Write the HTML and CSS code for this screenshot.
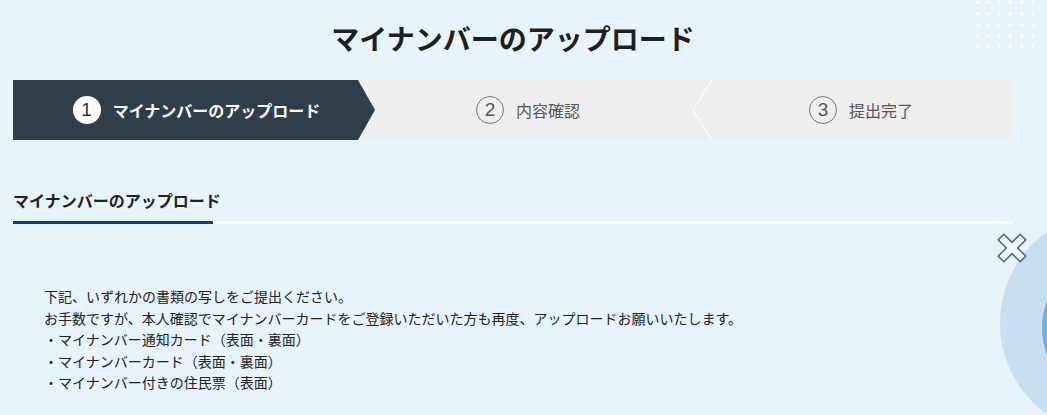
FILE: index.html
```html
<!DOCTYPE html>
<html lang="ja">
<head>
<meta charset="utf-8">
<title>マイナンバーのアップロード</title>
<link rel="stylesheet" href="styles.css">
</head>
<body>
<div class="dots"></div>
<div class="corner">
  <div class="bubble"><div class="bubble-core"></div></div>
</div>
<svg class="cross" width="32" height="32" viewBox="-16 -16 32 32">
  <polygon transform="rotate(45)" points="-4,-15.5 4,-15.5 4,-4 15.5,-4 15.5,4 4,4 4,15.5 -4,15.5 -4,4 -15.5,4 -15.5,-4 -4,-4"/>
</svg>

<main class="page">
<h1 class="title">マイナンバーのアップロード</h1>

<ol class="steps">
  <li class="step current"><span class="num">1</span>マイナンバーのアップロード</li>
  <li class="step middle"><span class="num">2</span>内容確認</li>
  <li class="step last"><span class="num">3</span>提出完了</li>
</ol>

<section class="upload">
  <div class="heading"><h2>マイナンバーのアップロード</h2></div>
  <div class="notice">
    <p>下記、いずれかの書類の写しをご提出ください。</p>
    <p>お手数ですが、本人確認でマイナンバーカードをご登録いただいた方も再度、アップロードお願いいたします。</p>
    <p>・マイナンバー通知カード（表面・裏面）</p>
    <p>・マイナンバーカード（表面・裏面）</p>
    <p>・マイナンバー付きの住民票（表面）</p>
  </div>
</section>
</main>
</body>
</html>
```

FILE: styles.css
```css
html, body {
    margin: 0;
    height: 100%;
    overflow: hidden;
}
body {
    background: #e8f3fa;
    font-family: "Noto Sans CJK JP", "Noto Sans", sans-serif;
    color: #222;
    position: relative;
}
.page {
    width: 1000px;
    padding-left: 13px;
}
.title {
    margin: 0;
    padding-top: 18px;
    height: 40px;
    line-height: 40px;
    text-align: center;
    font-size: 28px;
    font-weight: 700;
    color: #1f1f1f;
    margin-bottom: 22px;
}

/* step indicator */
.steps {
    display: flex;
    margin: 0;
    padding: 0;
    list-style: none;
    height: 60px;
    background: #efefef;
}
.step {
    display: flex;
    align-items: center;
    justify-content: center;
    font-size: 16px;
    color: #555;
    position: relative;
}
.step .num {
    display: flex;
    align-items: center;
    justify-content: center;
    width: 26px;
    height: 26px;
    border: 1px solid #777;
    border-radius: 50%;
    margin-right: 12px;
    font-family: "Liberation Sans", sans-serif;
    font-size: 19px;
    font-weight: 300;
    color: #555;
}
.step.current {
    width: 345px;
    padding-left: 22px;
    box-sizing: border-box;
    background: #2f3e4b;
    color: #fff;
    font-weight: 700;
}
.step.current::after {
    content: "";
    position: absolute;
    right: -17px;
    top: 0;
    width: 17px;
    height: 60px;
    background: #2f3e4b;
    clip-path: polygon(0 0, 100% 50%, 0 100%);
}
.step.current .num {
    width: 28px;
    height: 28px;
    border: 0;
    background: #fff;
    color: #333;
    font-weight: 400;
}
.step.middle {
    width: 335px;
    padding-left: 5px;
    box-sizing: border-box;
}
.step.middle::after {
    content: "";
    position: absolute;
    right: -19px;
    top: 0;
    width: 19px;
    height: 60px;
    background: linear-gradient(to top right, transparent calc(50% - 1px), #fff 50%, transparent calc(50% + 1px)) bottom / 100% 50% no-repeat,
                linear-gradient(to bottom right, transparent calc(50% - 1px), #fff 50%, transparent calc(50% + 1px)) top / 100% 50% no-repeat;
    z-index: 1;
}
.step.last {
    flex: 1;
    padding-left: 16px;
}

/* section heading */
.upload {
    margin-top: 48px;
}
.heading {
    border-bottom: 3px solid #fff;
}
.heading h2 {
    width: 200px;
    margin: 0 0 -3px;
    padding-bottom: 9px;
    line-height: 24px;
    font-size: 16px;
    font-weight: 700;
    white-space: nowrap;
    border-bottom: 3px solid #0a3f8c;
}
.notice {
    padding: 62px 0 0 31px;
    font-size: 14px;
    line-height: 21.5px;
}
.notice p {
    margin: 0;
}

/* background decoration */
.dots {
    position: absolute;
    left: 975px;
    top: 0;
    width: 66px;
    height: 55px;
    background: radial-gradient(circle, rgba(255, 255, 255, 0.75) 1.6px, transparent 2.2px) -3px -3px / 11px 11px;
}
.corner {
    position: absolute;
    left: 990px;
    top: 200px;
    width: 57px;
    height: 215px;
    overflow: hidden;
}
.bubble {
    position: absolute;
    left: 10px;
    top: 11px;
    width: 224px;
    height: 224px;
    border-radius: 50%;
    background: #c6e0f2;
}
.bubble-core {
    position: absolute;
    left: 42px;
    top: 42px;
    width: 150px;
    height: 150px;
    border-radius: 50%;
    background: #6bb0e2;
}
.cross {
    position: absolute;
    left: 996px;
    top: 232px;
}
.cross polygon {
    fill: #f4f8fc;
    stroke: #4c6b9c;
    stroke-width: 1.6;
    stroke-linejoin: round;
}
```
